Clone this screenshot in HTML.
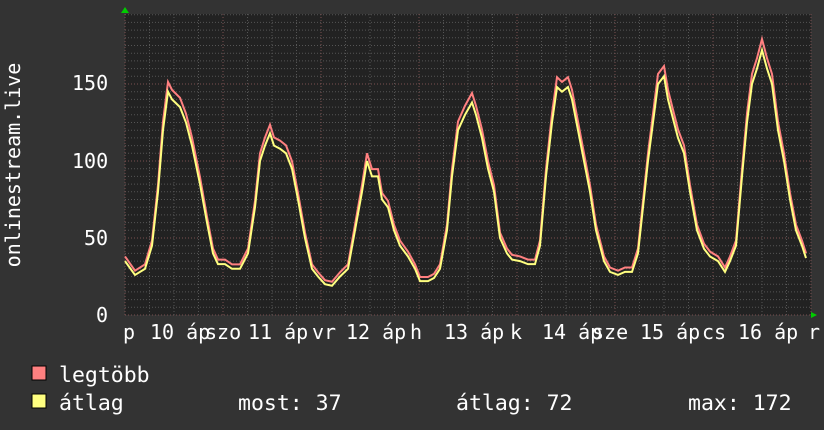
<!DOCTYPE html>
<html><head><meta charset="utf-8"><style>
body{margin:0;background:#333;}
svg{display:block}
text{font-family:"DejaVu Sans Mono","Liberation Mono",monospace;fill:#fff;font-size:20px}
.l{font-size:21.5px}
</style></head><body>
<svg id="g" width="824" height="430" xmlns="http://www.w3.org/2000/svg">
<rect width="824" height="430" fill="#333"/>
<rect x="125" y="14" width="686" height="301" fill="#222"/>
<g id="grid"></g>
<polyline id="mx" fill="none" stroke="#ff8080" stroke-width="2"/>
<polyline id="av" fill="none" stroke="#ffff80" stroke-width="2"/>
<polygon points="121,13 125,7 129,13" fill="#0c0"/>
<polygon points="811,312 817,315 811,318" fill="#0c0"/>
<text x="72" y="90">150</text>
<text x="72" y="168">100</text>
<text x="84" y="245">50</text>
<text x="96" y="322">0</text>
<text transform="translate(20,165) rotate(-90)" text-anchor="middle">onlinestream.live</text>
<g>
<text x="123" y="339">p</text>
<text x="150" y="339">10 áp</text><text x="205" y="339">szo</text>
<text x="248" y="339">11 áp</text><text x="312" y="339">vr</text>
<text x="346" y="339">12 áp</text><text x="410" y="339">h</text>
<text x="444" y="339">13 áp</text><text x="510" y="339">k</text>
<text x="542" y="339">14 áp</text><text x="592" y="339">sze</text>
<text x="640" y="339">15 áp</text><text x="702" y="339">cs</text>
<text x="738" y="339">16 áp</text><text x="808" y="339">r</text>
</g>
<rect x="32" y="366" width="14" height="14" fill="#ff8080" stroke="#000"/>
<rect x="32" y="394" width="14" height="14" fill="#ffff80" stroke="#000"/>
<text class="l" x="59" y="382">legtöbb</text>
<text class="l" x="59" y="410">átlag</text>
<text class="l" x="238" y="410">most: 37</text>
<text class="l" x="456" y="410">átlag: 72</text>
<text class="l" x="688" y="410">max: 172</text>
</svg>
<script>
var g=document.getElementById('grid'),h='';
for(var v=0;v<=195;v+=5){var y=315-v*1.54;h+='<line x1="125" x2="811" y1="'+y+'" y2="'+y+'" stroke="'+(v%50==0?'#7a5050':'#555')+'" stroke-dasharray="1,2" stroke-width="1"/>';}
for(var i=0;i<=28;i++){var x=125+i*24.5;h+='<line y1="14" y2="315" x1="'+x+'" x2="'+x+'" stroke="'+(i%4==0?'#7a5050':'#555')+'" stroke-dasharray="1,2"/>';}
g.innerHTML=h;
var d=[125,35,135,26,145,30,152,45,158,80,163,120,168,145,172,140,180,135,186,125,192,110,200,85,207,60,213,40,218,33,225,33,232,30,240,30,248,40,255,70,260,100,265,110,270,118,274,110,280,108,286,105,292,95,298,75,305,50,312,30,318,25,325,20,332,19,340,25,348,30,355,55,362,80,367,100,372,90,378,90,382,75,388,70,394,55,400,45,408,38,415,30,420,22,428,22,434,24,440,30,447,55,452,90,458,120,465,130,472,138,476,130,482,115,488,95,494,80,500,50,507,40,512,36,520,35,528,33,535,33,540,45,546,90,552,125,557,148,562,145,568,148,572,140,578,120,584,100,590,80,596,55,604,35,610,28,618,26,625,28,632,28,638,40,643,70,648,100,654,130,658,150,664,155,668,140,672,130,678,115,684,105,690,80,697,55,704,43,710,38,718,35,725,28,730,35,736,45,742,90,747,125,752,150,757,160,762,172,767,160,772,150,778,120,784,100,790,75,796,55,802,45,806,37];
var a='',m='';
for(var i=0;i<d.length;i+=2){a+=d[i]+','+(315-d[i+1]*1.54)+' ';m+=d[i]+','+(315-(d[i+1]*1.03+2)*1.54)+' ';}
document.getElementById('av').setAttribute('points',a);
document.getElementById('mx').setAttribute('points',m);
</script>
</body></html>
